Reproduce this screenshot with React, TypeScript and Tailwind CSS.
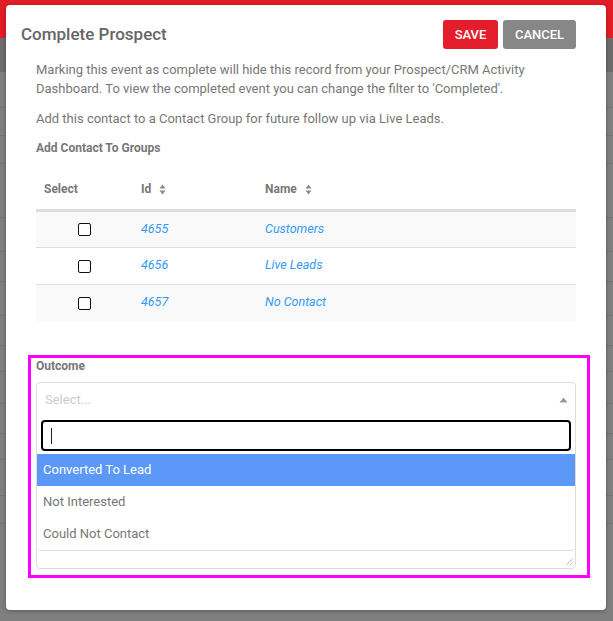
import React from 'react';

const rows = [
  { id: '4655', name: 'Customers' },
  { id: '4656', name: 'Live Leads' },
  { id: '4657', name: 'No Contact' },
];

const options = ['Converted To Lead', 'Not Interested', 'Could Not Contact'];

const SortIcon = () => (
  <svg width="7" height="11" viewBox="0 0 7 11" className="ml-[8px] inline-block">
    <path d="M3.5 0.5 L6.5 4.5 L0.5 4.5 Z" fill="#888" />
    <path d="M3.5 10.5 L6.5 6.5 L0.5 6.5 Z" fill="#888" />
  </svg>
);

const App: React.FC = () => {
  return (
    <div className="relative w-[613px] h-[621px] overflow-hidden bg-[#7f7f7f] font-['Roboto',sans-serif]">
      {/* page behind the overlay */}
      <div className="h-[38px] bg-[#e31d25] pl-[6px] text-[18px] text-white leading-[38px]">P</div>
      <div className="h-[34px] bg-[#6c6c6c]" />
      <div className="flex flex-col">
        {[36, 28, 28, 54, 34, 30, 34, 30, 26, 32, 30, 26, 36, 28].map((h, i) => (
          <div key={i} className="border-b border-[#747474]" style={{ height: h }} />
        ))}
      </div>

      {/* modal */}
      <div className="absolute left-[6px] top-[5px] w-[600px] h-[605px] rounded-[4px] bg-white shadow-[0_1px_4px_rgba(0,0,0,0.3)]">
        <div className="flex items-center justify-between pl-[15px] pr-[30px] pt-[15px]">
          <h2 className="text-[17px] font-medium text-[#666]">Complete Prospect</h2>
          <div className="flex gap-[5px]">
            <button className="h-[29px] w-[55px] rounded-[3px] bg-[#e31d2b] text-[13px] font-medium text-white">SAVE</button>
            <button className="h-[29px] w-[73px] rounded-[3px] bg-[#878787] text-[13px] font-medium text-white">CANCEL</button>
          </div>
        </div>

        <div className="px-[30px]">
          <p className="mt-[11px] text-[13px] leading-[19px] text-[#777]">
            Marking this event as complete will hide this record from your Prospect/CRM Activity Dashboard. To view the completed event you can change the filter to 'Completed'.
          </p>
          <p className="mt-[11px] text-[13px] leading-[19px] text-[#777]">
            Add this contact to a Contact Group for future follow up via Live Leads.
          </p>
          <h3 className="mt-[11px] text-[12px] font-bold leading-[19px] text-[#777]">Add Contact To Groups</h3>

          <table className="mt-[12px] w-full border-collapse text-[12px]">
            <thead>
              <tr className="h-[40px] border-b-[3px] border-[#ddd] text-left font-bold text-[#777]">
                <th className="w-[97px] pl-[8px] font-bold">Select</th>
                <th className="w-[124px] pl-[8px] font-bold">
                  <span className="inline-flex items-center">Id<SortIcon /></span>
                </th>
                <th className="pl-[8px] font-bold">
                  <span className="inline-flex items-center">Name<SortIcon /></span>
                </th>
              </tr>
            </thead>
            <tbody>
              {rows.map((r, i) => (
                <tr key={r.id} className={`h-[37px] ${i < 2 ? 'border-b border-[#ddd]' : ''} ${i % 2 === 0 ? 'bg-[#f9f9f9]' : 'bg-white'}`}>
                  <td className="text-center">
                    <span className="inline-block h-[13px] w-[13px] rounded-[2px] border border-[#111] bg-white align-middle" />
                  </td>
                  <td className="pl-[8px] text-[12.5px] italic text-[#3399f3]">{r.id}</td>
                  <td className="pl-[8px] text-[12.5px] italic text-[#3399f3]">{r.name}</td>
                </tr>
              ))}
            </tbody>
          </table>

          <div className="mt-[34px] -ml-[8px] -mr-[14px] border-[3px] border-[#ff00ff] pl-[5px] pr-[11px] pb-[6px]">
            <div className="text-[12px] font-bold leading-[16px] text-[#777]">Outcome</div>
            <div className="mt-[8px] rounded-[4px] border border-[#ddd]">
              <div className="flex h-[33px] items-center justify-between pl-[8px] pr-[7px]">
                <span className="text-[13px] text-[#ccc]">Select...</span>
                <svg width="9" height="6" viewBox="0 0 9 6">
                  <path d="M4.5 0.5 L8.5 5.5 L0.5 5.5 Z" fill="#999" />
                </svg>
              </div>
              <div className="rounded-b-[4px] border-b border-[#ddd]">
                <div className="px-[4px] pt-[4px] pb-[3px]">
                  <div className="flex h-[31px] items-center rounded-[4px] border-2 border-black pl-[8px]">
                    <span className="h-[16px] w-px bg-[#222]" />
                  </div>
                </div>
                {options.map((o, i) => (
                  <div
                    key={o}
                    className={`flex h-[32px] items-center pl-[6px] text-[13px] ${i === 0 ? 'bg-[#5b98f8] text-white' : 'text-[#777]'}`}
                  >
                    {o}
                  </div>
                ))}
              </div>
              <div className="relative h-[17px]">
                <svg width="8" height="8" viewBox="0 0 8 8" className="absolute bottom-[2px] right-[2px]">
                  <path d="M7.5 1 L1 7.5 M7.5 4.5 L4.5 7.5" stroke="#777" strokeWidth="1" strokeDasharray="1 1" />
                </svg>
              </div>
            </div>
          </div>
        </div>
      </div>
    </div>
  );
};

export default App;
